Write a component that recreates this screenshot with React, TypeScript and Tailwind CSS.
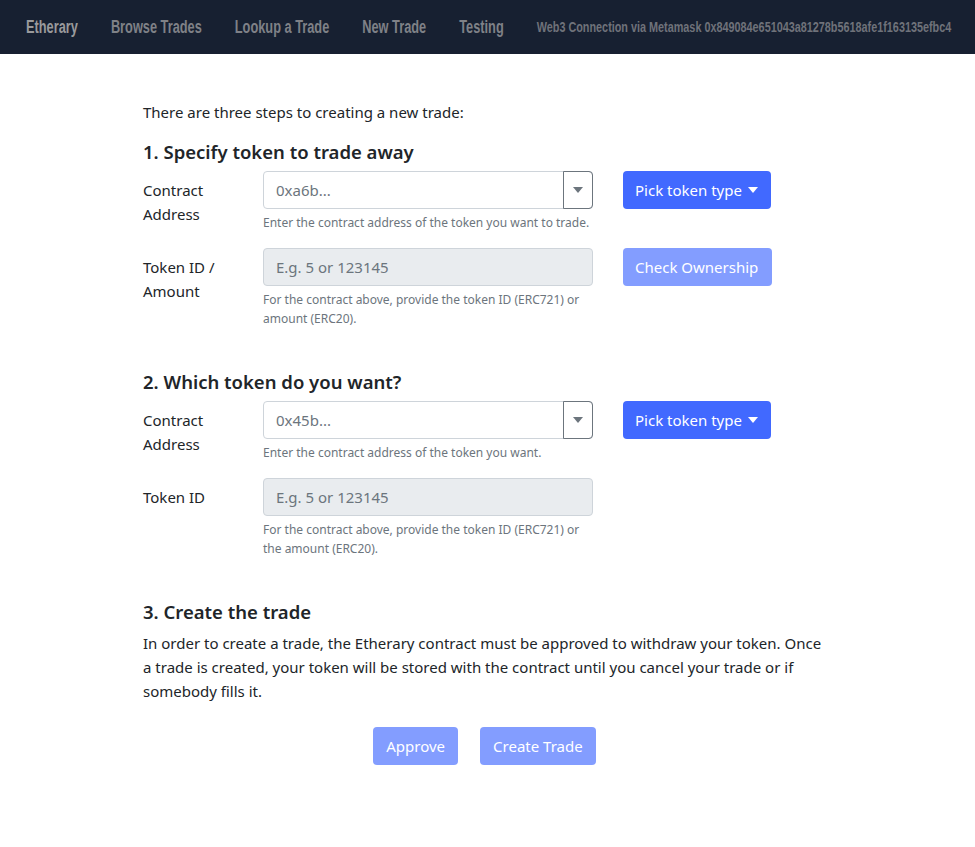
const NAV = ['Browse Trades', 'Lookup a Trade', 'New Trade', 'Testing'];

function Caret({ className = '' }: { className?: string }) {
  return (
    <svg className={className} width="10" height="6" viewBox="0 0 10 6" fill="currentColor">
      <path d="M0 0h10L5 6z" />
    </svg>
  );
}

function AddressRow({ value, help }: { value: string; help: string }) {
  return (
    <div className="flex mb-4">
      <label className="w-[120px] pr-[20px] pt-[7px] leading-6">Contract Address</label>
      <div className="w-[330px]">
        <div className="relative h-[38px] rounded border border-[#ced4da] bg-white">
          <div className="px-3 leading-[36px] text-[#6c757d]">{value}</div>
          <div className="absolute -right-px -top-px -bottom-px w-[30px] rounded-r border border-[#6c757d] flex items-center justify-center text-[#6c757d]">
            <Caret />
          </div>
        </div>
        <p className="mt-1 text-[12px] leading-[19px] text-[#6c757d]">{help}</p>
      </div>
      <div className="pl-[30px]">
        <button className="h-[38px] pl-3 pr-[13px] rounded bg-[#4169ff] text-white flex items-center gap-1">
          Pick token type
          <Caret className="ml-0.5" />
        </button>
      </div>
    </div>
  );
}

function AmountRow({ label, help, check }: { label: string; help: string; check?: boolean }) {
  return (
    <div className="flex mb-4">
      <label className="w-[120px] pr-[20px] pt-[7px] leading-6">{label}</label>
      <div className="w-[330px]">
        <div className="h-[38px] rounded border border-[#ced4da] bg-[#e9ecef] px-3 leading-[36px] text-[#6c757d]">
          E.g. 5 or 123145
        </div>
        <p className="mt-1 text-[12px] leading-[19px] text-[#6c757d]">{help}</p>
      </div>
      {check && (
        <div className="pl-[30px]">
          <button className="h-[38px] pl-3 pr-[14px] rounded bg-[#839dff] text-white">Check Ownership</button>
        </div>
      )}
    </div>
  );
}

export default function App() {
  return (
    <div className="min-h-screen bg-white text-[#212529] text-[15px] leading-6 font-['Noto_Sans',sans-serif]">
      <nav className="h-[54px] bg-[#172031] flex items-center pl-[26px] overflow-hidden">
        {/* condensed nav face: Liberation Sans squeezed to the reference's narrow look */}
        <div className="flex items-center gap-[46.5px] whitespace-nowrap origin-left scale-x-[0.71] font-['Liberation_Sans',Arial,sans-serif] font-bold text-[#7f8187]">
          <span className="text-[18px] text-[#9a9a9c]">Etherary</span>
          {NAV.map((n) => (
            <span key={n} className="text-[18px]">{n}</span>
          ))}
          <span className="text-[15.25px] text-[#6f727a]">Web3 Connection via Metamask 0x849084e651043a81278b5618afe1f163135efbc4</span>
        </div>
      </nav>

      <main className="pl-[143px] pt-[46px] w-[833px]">
        <p className="mb-4">There are three steps to creating a new trade:</p>

        <h5 className="text-[18.5px] leading-6 font-semibold mb-[7px]">1. Specify token to trade away</h5>
        <AddressRow value="0xa6b..." help="Enter the contract address of the token you want to trade." />
        <AmountRow label="Token ID / Amount" help="For the contract above, provide the token ID (ERC721) or amount (ERC20)." check />

        <h5 className="mt-[42px] text-[18.5px] leading-6 font-semibold mb-[7px]">2. Which token do you want?</h5>
        <AddressRow value="0x45b..." help="Enter the contract address of the token you want." />
        <AmountRow label="Token ID" help="For the contract above, provide the token ID (ERC721) or the amount (ERC20)." />

        <h5 className="mt-[42px] text-[18.5px] leading-6 font-semibold mb-[7px]">3. Create the trade</h5>
        <p>
          In order to create a trade, the Etherary contract must be approved to withdraw your token. Once a trade is
          created, your token will be stored with the contract until you cancel your trade or if somebody fills it.
        </p>

        <div className="mt-6 flex justify-center gap-[22px] pr-[7px]">
          <button className="h-[38px] px-[13px] rounded bg-[#839dff] text-white">Approve</button>
          <button className="h-[38px] px-[13px] rounded bg-[#839dff] text-white">Create Trade</button>
        </div>
      </main>
    </div>
  );
}
